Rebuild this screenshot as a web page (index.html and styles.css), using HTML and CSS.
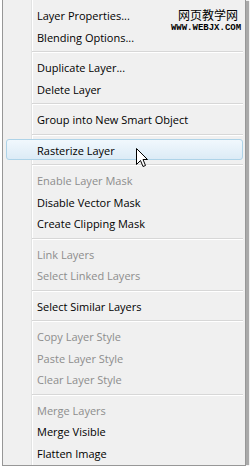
FILE: index.html
```html
<!DOCTYPE html>
<html lang="en">
<head>
  <meta charset="UTF-8">
  <meta name="viewport" content="width=device-width, initial-scale=1.0">
  <title>Layer Menu</title>
  <link rel="stylesheet" href="styles.css">
</head>
<body>
  <div class="menu">
    <div class="item">Layer Properties...</div>
    <div class="item">Blending Options...</div>
    <div class="sep"></div>
    <div class="item">Duplicate Layer...</div>
    <div class="item">Delete Layer</div>
    <div class="sep"></div>
    <div class="item">Group into New Smart Object</div>
    <div class="sep"></div>
    <div class="item hover">Rasterize Layer</div>
    <div class="sep"></div>
    <div class="item disabled">Enable Layer Mask</div>
    <div class="item">Disable Vector Mask</div>
    <div class="item">Create Clipping Mask</div>
    <div class="sep"></div>
    <div class="item disabled">Link Layers</div>
    <div class="item disabled">Select Linked Layers</div>
    <div class="sep"></div>
    <div class="item">Select Similar Layers</div>
    <div class="sep"></div>
    <div class="item disabled">Copy Layer Style</div>
    <div class="item disabled">Paste Layer Style</div>
    <div class="item disabled">Clear Layer Style</div>
    <div class="sep"></div>
    <div class="item disabled">Merge Layers</div>
    <div class="item">Merge Visible</div>
    <div class="item">Flatten Image</div>
  </div>

  <!-- watermark over the menu -->
  <div class="watermark">
    <div class="wm-cn">网页教学网</div>
    <div class="wm-url">WWW.WEBJX.COM</div>
  </div>

  <!-- mouse pointer -->
  <svg class="cursor" width="13" height="20" viewBox="0 0 13 20">
    <path d="M0.5 0.5 L0.5 16.5 L4.5 12.5 L7 18.5 L9.5 17.5 L7 11.5 L11.5 11.5 Z" fill="#fff" stroke="#000" stroke-width="1" stroke-linejoin="miter"/>
  </svg>
</body>
</html>
```

FILE: styles.css
```css
/* Basic resets */
* {
  margin: 0;
  padding: 0;
  box-sizing: border-box;
}
body, html {
  height: 100%;
  background: #fff;
  overflow: hidden;
}
body {
  font-family: "Open Sans", "Noto Sans", sans-serif;
  font-size: 11px;
  color: #000;
}
/* Menu panel */
.menu {
  margin-left: 2px;
  width: 244px;
  height: 466px;
  padding: 4px 2px 0 0;
  border: 1px solid #979797;
  border-top: none;
  background:
    linear-gradient(to right, transparent 28px, #e2e3e3 28px, #e2e3e3 29px, #fff 29px, #fff 30px, transparent 30px),
    #f0f0f0;
  box-shadow: 4px 0 1px -1px #a9a9a9;
}
.item {
  height: 21.5px;
  line-height: 21.5px;
  margin-left: 3px;
  padding-left: 30px;
  white-space: nowrap;
  border: 1px solid transparent;
  border-radius: 3px;
}
.item.disabled {
  color: #8d8d8d;
}
.item.hover {
  border-color: #aed3e8;
  background: linear-gradient(to bottom, #f1f8fd, #dcebf6);
}
.sep {
  margin: 4px 0 3px 29px;
  border-top: 1px solid #d7d7d7;
  border-bottom: 1px solid #fff;
}
/* Watermark */
.watermark {
  position: absolute;
  left: 170px;
  top: 8px;
  width: 72px;
  text-align: center;
}
.wm-cn {
  font-family: "Noto Sans CJK SC", sans-serif;
  font-size: 12px;
  line-height: 14px;
  padding-left: 4px;
}
.wm-url {
  font-family: "Liberation Mono", monospace;
  font-weight: bold;
  font-size: 9px;
  line-height: 11px;
  margin-top: 1px;
}
/* Pointer */
.cursor {
  position: absolute;
  left: 136px;
  top: 148px;
}
```
